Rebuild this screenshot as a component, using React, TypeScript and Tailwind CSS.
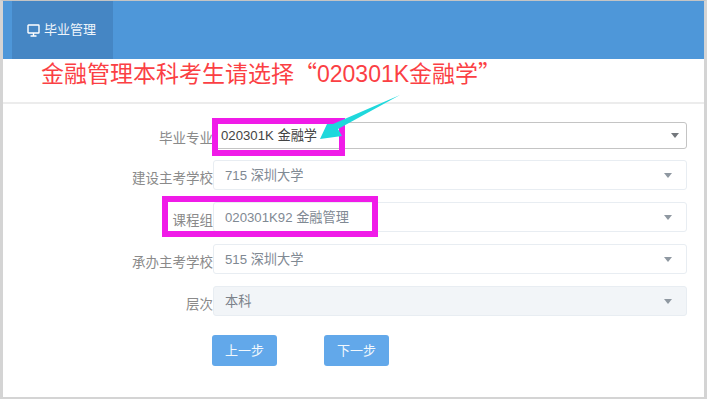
function Caret({ dark }: { dark?: boolean }) {
  return <span className={`w-0 h-0 border-x-[4px] border-x-transparent border-t-[5px] ${dark ? "border-t-[#73777c]" : "border-t-[#8f98a1]"}`} />;
}
function Row({ label, value, kind = "normal" }: { label: string; value?: string; kind?: "active" | "normal" | "disabled" }) {
  const box =
    kind === "active"
      ? "h-[27px] border-[#c4c4c4] bg-white text-[#444] pl-[7px] pr-[7px]"
      : kind === "disabled"
      ? "h-[30px] border-[#e8edf2] bg-[#f2f5f8] text-[#7b828a] pl-[11px] pr-[14px]"
      : "h-[30px] border-[#e8edf2] bg-white text-[#7f8993] pl-[11px] pr-[14px]";
  return (
    <div className="flex items-center">
      <div className="w-[210px] pt-[7px] text-right text-[13.5px] text-[#8a8a8a] leading-none">{label}</div>
      <div className={`w-[474px] flex items-center justify-between rounded-[3px] border text-[13.2px] ${box}`}>
        <span className="pt-[1px]">{value}</span>
        <Caret dark={kind === "active"} />
      </div>
    </div>
  );
}
export default function App() {
  return (
    <div className="relative w-[707px] h-[401px] bg-white overflow-hidden font-['Liberation_Sans','Noto_Sans_CJK_SC',sans-serif]">
      <div className="h-[399px] border-t border-t-[#c4c4c4] border-l-[3px] border-l-[#d4d4d4] border-r-[3px] border-r-[#d4d4d4] border-b-2 border-b-[#d4d4d4] flex flex-col">
        <header className="h-[58px] shrink-0 bg-[#4e97d9] pl-[9px] flex">
          <div className="w-[101px] bg-[#4586c4] flex items-center gap-[4px] pl-[15px] text-[#eef5fb] text-[13px]">
            <svg width="13" height="13" viewBox="0 0 13 13" fill="none" stroke="white" strokeWidth="1.4">
              <rect x="1" y="1" width="11" height="8" rx="0.5" />
              <path d="M6.5 9V12M3.5 12H9.5" />
            </svg>
            <span>毕业管理</span>
          </div>
        </header>
        <div className="mt-[43px] h-[2px] shrink-0 bg-[#ececec]" />
        <main className="pt-[18px] flex flex-col gap-[12px]">
          <div className="-mb-[1px]"><Row label="毕业专业" value="020301K 金融学" kind="active" /></div>
          <Row label="建设主考学校" value="715 深圳大学" />
          <Row label="课程组" value="020301K92 金融管理" />
          <Row label="承办主考学校" value="515 深圳大学" />
          <Row label="层次" value="本科" kind="disabled" />
          <div className="flex gap-[47px] pl-[209px] pt-[7px]">
            <button className="w-[65px] h-[31px] rounded-[3px] bg-[#62a8ea] text-[#f2f8fd] text-[13px]">上一步</button>
            <button className="w-[65px] h-[31px] rounded-[3px] bg-[#62a8ea] text-[#f2f8fd] text-[13px]">下一步</button>
          </div>
        </main>
      </div>
      <div className="absolute left-[41px] top-[57px] text-[23px] leading-[30px] text-[#fb3f44] whitespace-nowrap">
        金融管理本科考生请选择<span className="font-['Noto_Sans_CJK_SC']">“</span>020301K金融学<span className="font-['Noto_Sans_CJK_SC']">”</span>
      </div>
      <div className="absolute left-[212px] top-[118px] w-[133px] h-[38px] border-[6px] border-[#f01be8]" />
      <div className="absolute left-[162px] top-[196px] w-[216px] h-[41px] border-[6px] border-[#f01be8]" />
      <svg className="absolute left-[318px] top-[92px]" width="84" height="52" viewBox="0 0 84 52">
        <path d="M82 3 L20 37 L24 44 L2 47 L9 32 L15 32 Z" fill="#1fd8dc" />
      </svg>
    </div>
  );
}
